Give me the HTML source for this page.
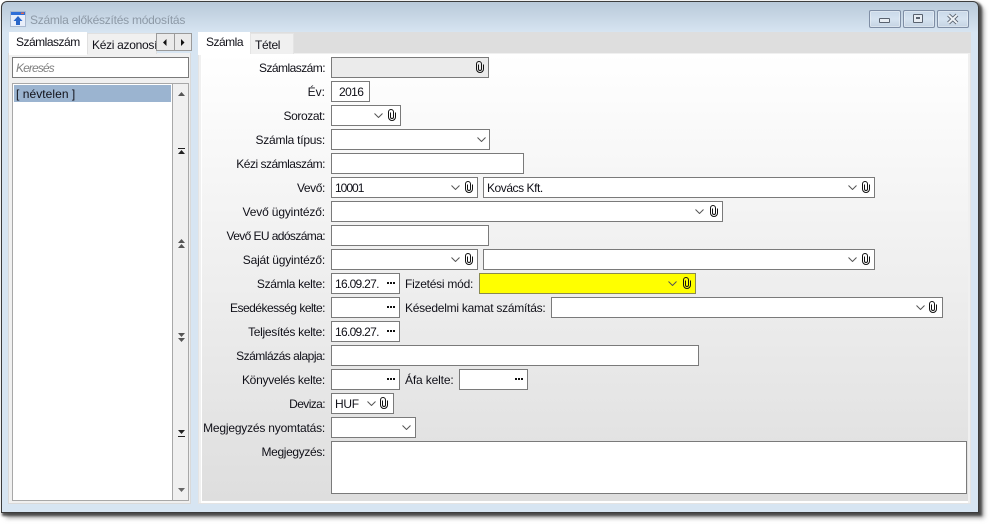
<!DOCTYPE html>
<html><head><meta charset="utf-8">
<style>
html,body{margin:0;padding:0;background:#fff;width:991px;height:525px;overflow:hidden}
*{box-sizing:border-box}
body{font:12px/16px "Liberation Sans",sans-serif;color:#101018;position:relative}
.a{position:absolute}
#win{left:1px;top:1px;width:978px;height:512px;border:1px solid #3c3c3c;border-radius:6px 6px 0 0;background:linear-gradient(#b8c9d9 0,#d7e5f2 31px);box-shadow:2px 2px 2px 1px rgba(50,50,50,.8),5px 5px 5px rgba(110,110,110,.6)}
.f{position:absolute;height:21px;background:#fff;border:1px solid #7a7a7a;padding:2px 0 0 3px;white-space:nowrap;overflow:hidden}
.n{letter-spacing:-.7px}
.l{position:absolute;right:666px;text-align:right;white-space:nowrap}
.t{position:absolute;white-space:nowrap}
.i{position:absolute}
.btn{position:absolute;top:10px;width:32px;height:18px;border:1px solid #7f8ea5;border-radius:2px;background:linear-gradient(#c9d8e8,#d6e3f0 50%,#c4d3e3);box-shadow:inset 0 0 0 1px rgba(255,255,255,.35)}
</style></head><body>
<svg width="0" height="0" style="position:absolute"><defs>
<symbol id="c" viewBox="0 0 8 12"><path d="M7.500 3.500V8a3.500 3.500 0 0 1-7 0V3a2.500 2.500 0 0 1 5 0V8a1.500 1.500 0 0 1-3 0V3.500" fill="none" stroke="#111" stroke-width="1"/></symbol>
<symbol id="v" viewBox="0 0 9 5"><path d="M.5.5L4.500 4.500 8.500.5" fill="none" stroke="#555" stroke-width="1"/></symbol>
<symbol id="d" viewBox="0 0 8 2"><rect x="0" y="0" width="2" height="2" fill="#111"/><rect x="3" y="0" width="2" height="2" fill="#111"/><rect x="6" y="0" width="2" height="2" fill="#111"/></symbol>
</defs></svg>

<div id="win" class="a"></div>

<!-- title -->
<svg class="i" style="left:10px;top:11px" width="16" height="16" viewBox="0 0 16 16"><rect x=".5" y=".5" width="15" height="15" fill="#e8eefa" stroke="#a9b9d0"/><rect x="1" y="1" width="14" height="3" fill="#2f6fd8"/><rect x="11" y="1.500" width="3" height="1.500" fill="#e06a50"/><path d="M8 5l4.500 5H10v4H6v-4H3.500z" fill="#2a66c8"/></svg>
<div class="t" style="left:30px;top:12px;color:#8d99a6;letter-spacing:-.25px">Számla előkészítés módosítás</div>

<!-- window buttons -->
<div class="btn" style="left:869px"><div class="a" style="left:9px;top:7px;width:11px;height:5px;background:#e8edf3;border:1px solid #59626f;border-radius:1px"></div></div>
<div class="btn" style="left:903px"><div class="a" style="left:9px;top:3px;width:10px;height:9px;background:#e8edf3;border:1px solid #59626f;border-radius:1px"></div><div class="a" style="left:12px;top:6px;width:4px;height:2px;background:#59626f"></div></div>
<div class="btn" style="left:937px"><svg class="i" style="left:9px;top:2px" width="12" height="12" viewBox="0 0 12 12"><path d="M1.500 2L10 10M10 2L1.500 10" stroke="#59626f" stroke-width="3.800"/><path d="M1.500 2L10 10M10 2L1.500 10" stroke="#eef2f6" stroke-width="2"/></svg></div>

<!-- left panel -->
<div class="a" style="left:8px;top:53px;width:183px;height:451px;background:#f0f0f0;border:1px solid #d9d9d9;border-top:0"></div>
<div class="a" style="left:9px;top:32px;width:78px;height:23px;background:#fff"></div>
<div class="t" style="left:16px;top:34px;letter-spacing:-.5px">Számlaszám</div>
<div class="a" style="left:87px;top:33px;width:70px;height:21px;background:#f0f0f0;border:1px solid #e0e0e0;border-bottom:0;overflow:hidden;white-space:nowrap;padding:3px 0 0 4px;letter-spacing:-.3px">Kézi azonosí</div>
<div class="a" style="left:156px;top:33px;width:19px;height:18px;background:#eaeaea;border:1px solid #9a9a9a"></div>
<div class="a" style="left:174px;top:33px;width:18px;height:18px;background:#eaeaea;border:1px solid #9a9a9a"></div>
<svg class="i" style="left:163px;top:39px" width="4" height="7"><path d="M3.500 0V7L0 3.500z" fill="#111"/></svg>
<svg class="i" style="left:181px;top:39px" width="4" height="7"><path d="M0 0V7L3.500 3.500z" fill="#111"/></svg>

<div class="a" style="left:12px;top:57px;width:177px;height:21px;background:#fff;border:1px solid #7a7a7a;padding:2px 0 0 3px;font-style:italic;color:#808080;letter-spacing:-.9px">Keresés</div>
<div class="a" style="left:12px;top:83px;width:177px;height:418px;background:#fff;border:1px solid #a8a8a8"></div>
<div class="a" style="left:172px;top:84px;width:1px;height:416px;background:#a8a8a8"></div>
<div class="a" style="left:173px;top:84px;width:15px;height:416px;background:#f0f0f0"></div>
<div class="a" style="left:14px;top:85px;width:157px;height:17px;background:#9bb4d0"></div>
<div class="t" style="left:16px;top:86px;letter-spacing:.05px">[ névtelen ]</div>

<svg class="i" style="left:177px;top:90px" width="10" height="410" viewBox="0 0 10 410">
<g fill="#555">
<path d="M1 6L4.500 2 8 6z"/>
<path d="M1 58h7v1H1zM1 64L4.500 60 8 64z" fill="#222"/>
<path d="M1 153L4.500 149 8 153zM1 158L4.500 154 8 158z"/>
<path d="M1 243L8 243 4.500 247zM1 248L8 248 4.500 252z"/>
<path d="M1 340h7L4.500 344zM1 346h7v1H1z" fill="#222"/>
<path d="M1 398h7L4.500 402z" fill="#666"/>
</g></svg>

<!-- right panel -->
<div class="a" style="left:198px;top:32px;width:773px;height:22px;background:#dedede"></div>
<div class="a" style="left:198px;top:53px;width:773px;height:451px;background:#f0f0f0;border:1px solid #e4e4e4;border-top:0"></div>
<div class="a" style="left:201px;top:54px;width:767px;height:449px;background:#fff"></div>
<div class="a" style="left:202px;top:54px;width:766px;height:447px;background:linear-gradient(#fff,#dedede)"></div>
<div class="a" style="left:198px;top:32px;width:52px;height:23px;background:#fff"></div>
<div class="t" style="left:206px;top:34px;letter-spacing:-.5px">Számla</div>
<div class="a" style="left:250px;top:33px;width:44px;height:21px;background:#f0f0f0;border:1px solid #e4e4e4;border-bottom:0;padding:3px 0 0 4px;letter-spacing:-.3px">Tétel</div>

<!-- labels -->
<div class="l" style="top:60px;letter-spacing:-.55px">Számlaszám:</div>
<div class="l" style="top:84px">Év:</div>
<div class="l" style="top:108px;letter-spacing:-.4px">Sorozat:</div>
<div class="l" style="top:132px;letter-spacing:-.25px">Számla típus:</div>
<div class="l" style="top:156px;letter-spacing:-.5px">Kézi számlaszám:</div>
<div class="l" style="top:180px;letter-spacing:-.4px">Vevő:</div>
<div class="l" style="top:204px;letter-spacing:-.15px">Vevő ügyintéző:</div>
<div class="l" style="top:228px;letter-spacing:-.6px">Vevő EU adószáma:</div>
<div class="l" style="top:252px;letter-spacing:-.2px">Saját ügyintéző:</div>
<div class="l" style="top:276px;letter-spacing:-.3px">Számla kelte:</div>
<div class="l" style="top:300px;letter-spacing:-.5px">Esedékesség kelte:</div>
<div class="l" style="top:324px;letter-spacing:-.3px">Teljesítés kelte:</div>
<div class="l" style="top:348px;letter-spacing:-.5px">Számlázás alapja:</div>
<div class="l" style="top:372px;letter-spacing:-.27px">Könyvelés kelte:</div>
<div class="l" style="top:396px;letter-spacing:-.6px">Deviza:</div>
<div class="l" style="top:420px;letter-spacing:-.2px">Megjegyzés nyomtatás:</div>
<div class="l" style="top:444px;letter-spacing:-.35px">Megjegyzés:</div>
<div class="t" style="left:405px;top:276px;letter-spacing:-.25px">Fizetési mód:</div>
<div class="t" style="left:405px;top:300px;letter-spacing:-.25px">Késedelmi kamat számítás:</div>
<div class="t" style="left:405px;top:372px;letter-spacing:-.15px">Áfa kelte:</div>

<!-- fields -->
<div class="f" style="left:331px;top:57px;width:158px;background:#ebebeb"></div>
<div class="f n" style="left:331px;top:81px;width:39px;padding-left:7px;letter-spacing:-.6px">2016</div>
<div class="f" style="left:331px;top:105px;width:70px"></div>
<div class="f" style="left:331px;top:129px;width:159px"></div>
<div class="f" style="left:331px;top:153px;width:193px"></div>
<div class="f n" style="left:331px;top:177px;width:147px;letter-spacing:-1px">10001</div>
<div class="f" style="left:483px;top:177px;width:392px;letter-spacing:-.45px">Kovács Kft.</div>
<div class="f" style="left:331px;top:201px;width:392px"></div>
<div class="f" style="left:331px;top:225px;width:158px"></div>
<div class="f" style="left:331px;top:249px;width:147px"></div>
<div class="f" style="left:483px;top:249px;width:392px"></div>
<div class="f n" style="left:331px;top:273px;width:69px">16.09.27.</div>
<div class="f" style="left:479px;top:273px;width:217px;background:#ff0;border-color:#8a8a50"></div>
<div class="f" style="left:331px;top:297px;width:69px"></div>
<div class="f" style="left:551px;top:297px;width:392px"></div>
<div class="f n" style="left:331px;top:321px;width:69px">16.09.27.</div>
<div class="f" style="left:331px;top:345px;width:368px"></div>
<div class="f" style="left:331px;top:369px;width:69px"></div>
<div class="f" style="left:459px;top:369px;width:69px"></div>
<div class="f" style="left:331px;top:393px;width:63px;letter-spacing:-.3px">HUF</div>
<div class="f" style="left:331px;top:417px;width:85px"></div>
<div class="f" style="left:331px;top:441px;width:636px;height:53px"></div>

<!-- chevrons -->
<svg class="i" style="left:374px;top:113px" width="9" height="5"><use href="#v"/></svg>
<svg class="i" style="left:477px;top:137px" width="9" height="5"><use href="#v"/></svg>
<svg class="i" style="left:451px;top:185px" width="9" height="5"><use href="#v"/></svg>
<svg class="i" style="left:848px;top:185px" width="9" height="5"><use href="#v"/></svg>
<svg class="i" style="left:695px;top:209px" width="9" height="5"><use href="#v"/></svg>
<svg class="i" style="left:451px;top:257px" width="9" height="5"><use href="#v"/></svg>
<svg class="i" style="left:848px;top:257px" width="9" height="5"><use href="#v"/></svg>
<svg class="i" style="left:668px;top:281px" width="9" height="5"><use href="#v"/></svg>
<svg class="i" style="left:916px;top:305px" width="9" height="5"><use href="#v"/></svg>
<svg class="i" style="left:367px;top:401px" width="9" height="5"><use href="#v"/></svg>
<svg class="i" style="left:402px;top:425px" width="9" height="5"><use href="#v"/></svg>

<!-- clips -->
<svg class="i" style="left:476px;top:61px" width="8" height="12"><use href="#c"/></svg>
<svg class="i" style="left:388px;top:109px" width="8" height="12"><use href="#c"/></svg>
<svg class="i" style="left:465px;top:181px" width="8" height="12"><use href="#c"/></svg>
<svg class="i" style="left:862px;top:181px" width="8" height="12"><use href="#c"/></svg>
<svg class="i" style="left:710px;top:205px" width="8" height="12"><use href="#c"/></svg>
<svg class="i" style="left:465px;top:253px" width="8" height="12"><use href="#c"/></svg>
<svg class="i" style="left:862px;top:253px" width="8" height="12"><use href="#c"/></svg>
<svg class="i" style="left:683px;top:277px" width="8" height="12"><use href="#c"/></svg>
<svg class="i" style="left:929px;top:301px" width="8" height="12"><use href="#c"/></svg>
<svg class="i" style="left:380px;top:397px" width="8" height="12"><use href="#c"/></svg>

<!-- dots -->
<svg class="i" style="left:387px;top:282px" width="8" height="2"><use href="#d"/></svg>
<svg class="i" style="left:387px;top:306px" width="8" height="2"><use href="#d"/></svg>
<svg class="i" style="left:387px;top:330px" width="8" height="2"><use href="#d"/></svg>
<svg class="i" style="left:387px;top:378px" width="8" height="2"><use href="#d"/></svg>
<svg class="i" style="left:515px;top:378px" width="8" height="2"><use href="#d"/></svg>
</body></html>
